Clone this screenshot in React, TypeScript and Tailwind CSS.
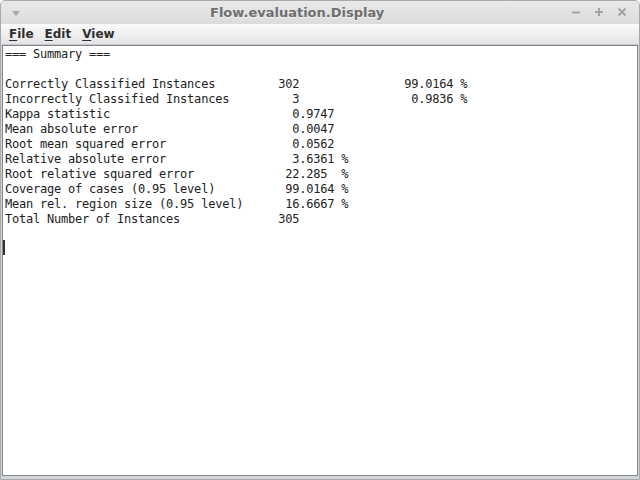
const lines = [
  "=== Summary ===",
  "",
  "Correctly Classified Instances         302               99.0164 %",
  "Incorrectly Classified Instances         3                0.9836 %",
  "Kappa statistic                          0.9747",
  "Mean absolute error                      0.0047",
  "Root mean squared error                  0.0562",
  "Relative absolute error                  3.6361 %",
  "Root relative squared error             22.285  %",
  "Coverage of cases (0.95 level)          99.0164 %",
  "Mean rel. region size (0.95 level)      16.6667 %",
  "Total Number of Instances              305     ",
];

function MenuItem({ label }: { label: string }) {
  return (
    <span className="text-[12px] font-bold text-[#2e2e2e]">
      <span className="underline underline-offset-2">{label[0]}</span>
      {label.slice(1)}
    </span>
  );
}

export default function App() {
  return (
    <div className="flex h-[480px] w-[640px] flex-col overflow-hidden rounded-t-[5px] border border-[#a9a9a9] bg-[#d4d4d4] font-['DejaVu_Sans',sans-serif]">
      {/* title bar */}
      <div className="relative flex h-[23px] shrink-0 items-center bg-gradient-to-b from-[#e9e9e9] to-[#dcdcdc] pl-[209px]">
        <svg className="absolute left-[11px] top-[10px]" width="8" height="5" viewBox="0 0 8 5" aria-hidden="true">
          <path d="M0 0h8L4 5Z" fill="#a8a8a8" />
        </svg>
        <span className="text-[13px] font-bold text-[#6e6e6e] [text-shadow:0_1px_0_#f4f4f4]">Flow.evaluation.Display</span>
        <div className="absolute right-[12px] top-[6px] flex items-center gap-[13px]">
          <svg width="10" height="10" viewBox="0 0 10 10" aria-hidden="true">
            <path d="M1 5.5h8" stroke="#a3a3a3" strokeWidth="2" />
          </svg>
          <svg width="10" height="10" viewBox="0 0 10 10" aria-hidden="true">
            <path d="M1 5h8M5 1v8" stroke="#a3a3a3" strokeWidth="2" />
          </svg>
          <svg width="10" height="10" viewBox="0 0 10 10" aria-hidden="true">
            <path d="M1.5 1.5l7 7M8.5 1.5l-7 7" stroke="#a3a3a3" strokeWidth="2" />
          </svg>
        </div>
      </div>
      {/* menu bar */}
      <div className="flex h-[21px] shrink-0 items-center gap-[11px] border-b border-[#c8c8c8] bg-gradient-to-b from-[#fbfbfb] to-[#e4e4e4] pl-[8px]">
        <MenuItem label="File" />
        <MenuItem label="Edit" />
        <MenuItem label="View" />
      </div>
      {/* text area */}
      <div className="mx-[1px] mb-[3px] flex-1 border border-[#7b8896] bg-white pl-[2px] pt-[1px]">
        <pre className="font-['DejaVu_Sans_Mono',monospace] text-[12px] leading-[15px] tracking-[-0.22px] text-[#222]">
          {lines.join("\n")}
        </pre>
        <div className="ml-[-2px] mt-[13px] h-[15px] w-[2px] bg-[#333]" />
      </div>
    </div>
  );
}
